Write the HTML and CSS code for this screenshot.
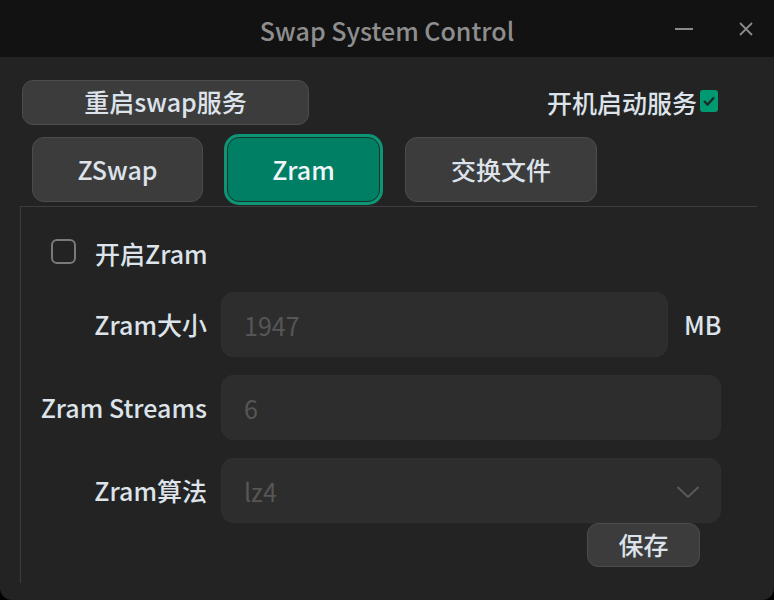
FILE: index.html
```html
<!DOCTYPE html>
<html lang="zh">
<head>
<meta charset="utf-8">
<title>Swap System Control</title>
<link rel="stylesheet" href="styles.css">
</head>
<body>
<div class="window">
  <div class="titlebar">
    <div></div>
    <div class="title">Swap System Control</div>
    <div class="controls">
      <span class="ctl min"><svg width="20" height="4" viewBox="0 0 20 4"><rect x="1" y="1" width="18" height="2" fill="#8a8a8a"/></svg></span>
      <span class="ctl close"><svg width="16" height="16" viewBox="0 0 16 16"><path d="M2 2 L14 14 M14 2 L2 14" stroke="#8a8a8a" stroke-width="1.8"/></svg></span>
    </div>
  </div>
  <div class="content">
    <div class="toprow">
      <button class="btn restart">重启swap服务</button>
      <label class="autostart">开机启动服务<span class="check-on"><svg width="14" height="12" viewBox="0 0 14 12"><path d="M2 6 L5.5 9.5 L12 2.5" stroke="#1d2b27" stroke-width="2.4" fill="none"/></svg></span></label>
    </div>
    <div class="tabs">
      <div class="tab zswap">ZSwap</div>
      <div class="tab zram active">Zram</div>
      <div class="tab files">交换文件</div>
    </div>
    <div class="pane">
      <div class="enable">
        <span class="check-off"></span>
        <span class="enable-text">开启Zram</span>
      </div>
      <div class="form">
        <div class="label">Zram大小</div>
        <div class="field with-unit">
          <div class="input short">1947</div>
          <span class="unit">MB</span>
        </div>
        <div class="label">Zram Streams</div>
        <div class="field">
          <div class="input">6</div>
        </div>
        <div class="label">Zram算法</div>
        <div class="field">
          <div class="input combo"><span>lz4</span><svg class="chev" width="24" height="14" viewBox="0 0 24 14"><path d="M1.5 2 L12 12 L22.5 2" stroke="#5a5a5a" stroke-width="1.8" fill="none"/></svg></div>
        </div>
      </div>
      <div class="saverow">
        <button class="btn save">保存</button>
      </div>
    </div>
  </div>
</div>
</body>
</html>
```

FILE: styles.css
```css
* { box-sizing: border-box; }
html, body {
  margin: 0;
  padding: 0;
  background: #000;
}
body {
  font-family: "Noto Sans CJK SC", "Noto Sans", sans-serif;
  color: #dde3ea;
}
.window {
  width: 774px;
  height: 600px;
  background: #232323;
  border-radius: 0 0 12px 12px;
  overflow: hidden;
  display: flex;
  flex-direction: column;
}
.titlebar {
  height: 57px;
  flex: none;
  background: #121212;
  display: grid;
  grid-template-columns: 1fr auto 1fr;
  align-items: center;
}
.title {
  font-size: 25px;
  font-weight: 500;
  color: #8e8e8e;
  padding-top: 2px;
}
.controls {
  display: flex;
  justify-content: flex-end;
  align-items: center;
  padding-right: 20px;
  gap: 44px;
}
.ctl { display: flex; align-items: center; }
.content {
  flex: 1;
  padding: 23px 17px 17px 20px;
  display: flex;
  flex-direction: column;
}
.btn {
  font-family: inherit;
  font-size: 25px;
  font-weight: 500;
  color: #dde3ea;
  background: #3c3c3c;
  border: 1px solid #4c4c4c;
  border-radius: 11px;
  padding: 0;
  line-height: 1;
}
.toprow {
  display: flex;
  justify-content: space-between;
  align-items: center;
  padding-left: 2px;
  padding-right: 39px;
  height: 45px;
}
.restart {
  width: 287px;
  height: 45px;
  padding-bottom: 2px;
}
.autostart {
  font-size: 25px;
  font-weight: 500;
  display: flex;
  align-items: center;
  gap: 3px;
  padding-bottom: 2px;
}
.check-on {
  width: 18px;
  height: 22px;
  background: #009a72;
  border-radius: 3px;
  display: flex;
  align-items: center;
  justify-content: center;
  margin-top: -2px;
}
.tabs {
  margin-top: 10px;
  height: 69px;
  display: flex;
  align-items: center;
  padding-left: 12px;
  gap: 24px;
}
.tab {
  height: 65px;
  border-radius: 12px;
  background: #3c3c3c;
  border: 1px solid #4c4c4c;
  display: flex;
  align-items: center;
  justify-content: center;
  font-size: 25px;
  font-weight: 500;
  padding-bottom: 2px;
}
.tab.zswap { width: 171px; }
.tab.zram {
  width: 153px;
  background: #007f65;
  border: 1px solid #16332c;
  box-shadow: 0 0 0 3px #0c9676;
  color: #f2f6f8;
}
.tab.files { width: 192px; margin-left: 1px; }
.pane {
  margin-top: 2px;
  flex: 1;
  border-top: 1px solid #3c3c3c;
  border-left: 1px solid #3c3c3c;
  padding: 31px 38px 0 0;
  display: flex;
  flex-direction: column;
}
.enable {
  display: flex;
  align-items: center;
  padding-left: 30px;
  gap: 19px;
  height: 26px;
}
.check-off {
  width: 25px;
  height: 25px;
  border: 2px solid #7a7a7a;
  border-radius: 6px;
}
.enable-text {
  font-size: 25px;
  font-weight: 500;
  padding-top: 4px;
}
.form {
  margin-top: 28px;
  display: grid;
  grid-template-columns: 186px 1fr;
  column-gap: 14px;
  row-gap: 18px;
  align-items: center;
}
.label {
  font-size: 25px;
  font-weight: 500;
  text-align: right;
  white-space: nowrap;
  padding-bottom: 2px;
}
.field {
  display: flex;
  align-items: center;
}
.with-unit { gap: 16px; }
.input {
  flex: 1;
  height: 65px;
  background: #2d2d2d;
  border: 1px solid #2f2f2f;
  border-radius: 12px;
  font-size: 25px;
  color: #565656;
  display: flex;
  align-items: center;
  padding: 0 20px 0 22px;
}
.input.short { flex: none; width: 447px; }
.unit {
  font-size: 25px;
  font-weight: 500;
  padding-bottom: 2px;
}
.combo { justify-content: space-between; }
.chev { margin-top: 2px; }
.saverow {
  display: flex;
  justify-content: flex-end;
  padding-right: 19px;
}
.save {
  width: 113px;
  height: 44px;
  padding-bottom: 2px;
}
```
